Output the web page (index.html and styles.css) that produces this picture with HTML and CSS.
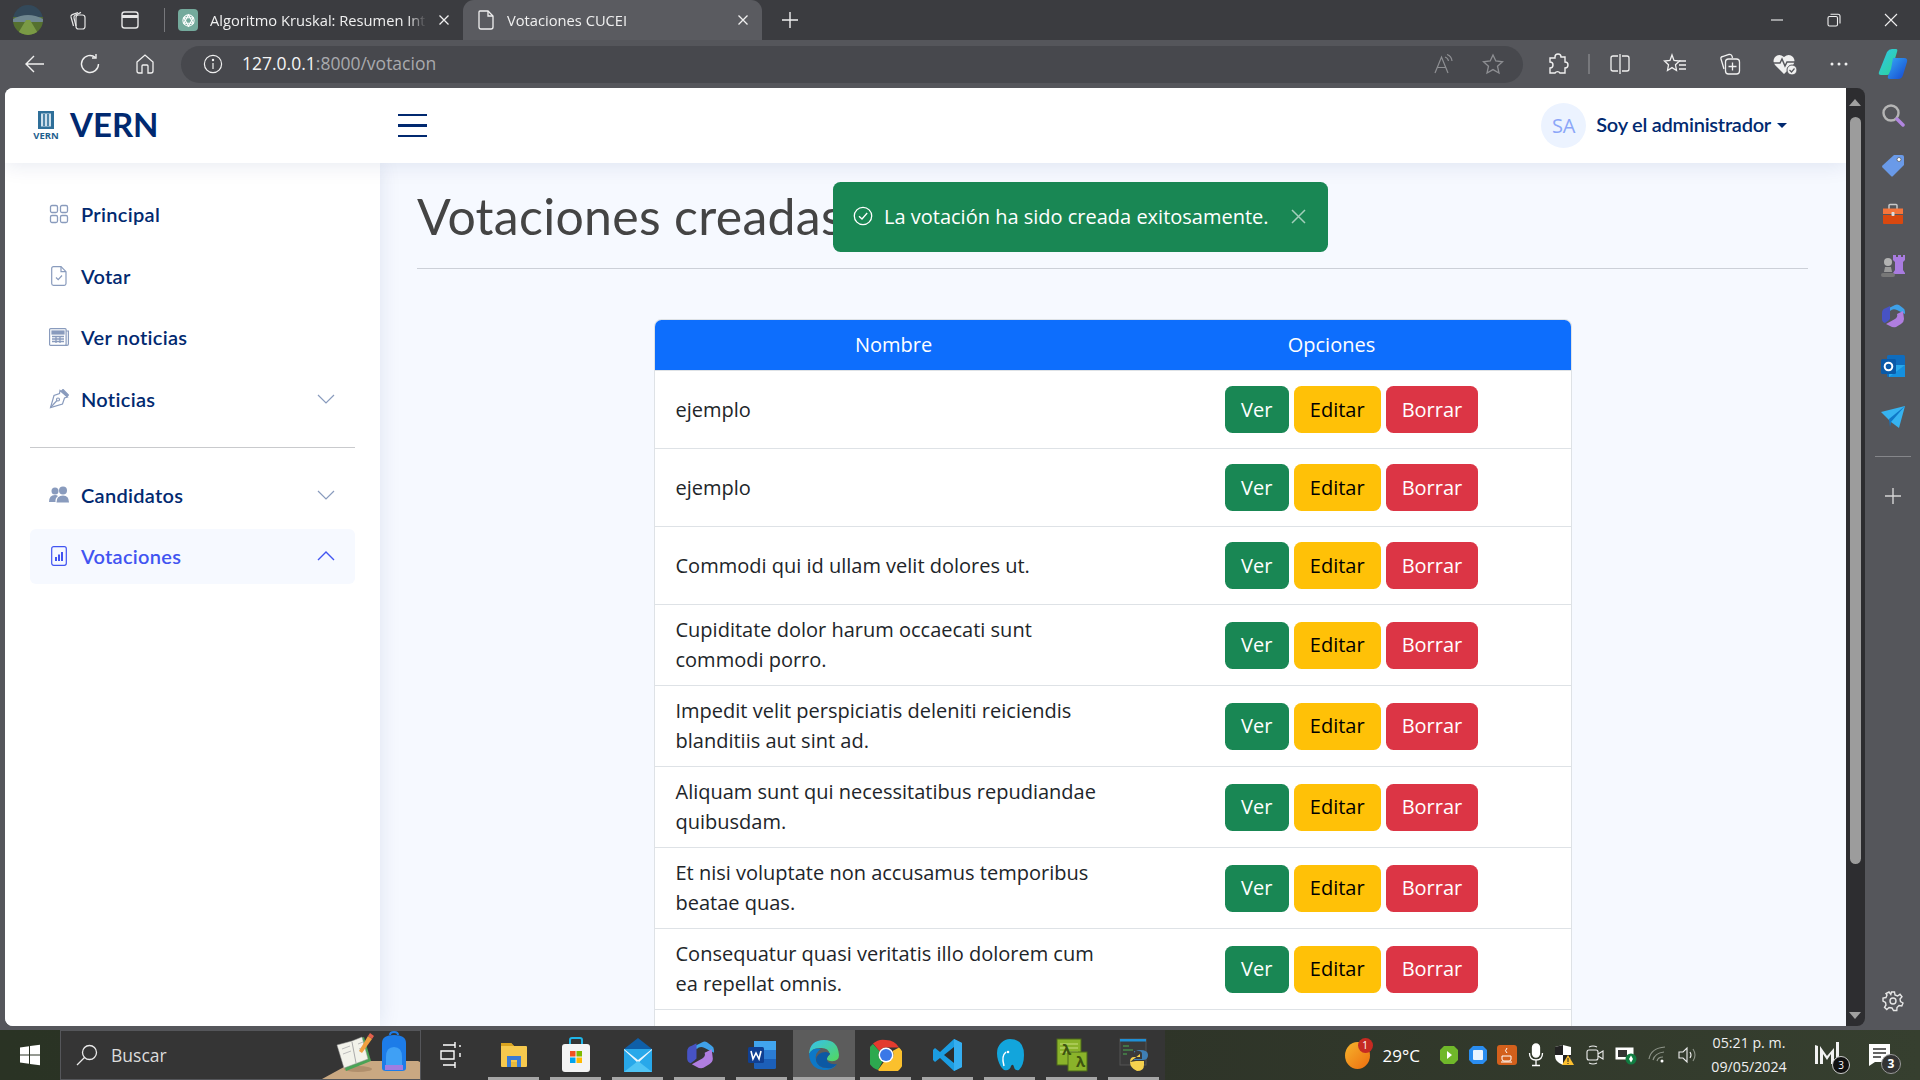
FILE: index.html
```html
<!DOCTYPE html>
<html lang="es">
<head>
  <meta charset="UTF-8">
  <title>Votaciones CUCEI</title>
  <link rel="stylesheet" href="styles.css">
</head>
<body>
<div class="navegador">

  <div class="pestanas">
    <div class="perfil">
      <svg width="30" height="30" viewBox="0 0 30 30"><defs><clipPath id="perfilClip"><ellipse cx="15" cy="15" rx="15" ry="15"/></clipPath></defs><g clip-path="url(#perfilClip)"><rect width="30" height="14" fill="#33495a"/><rect y="12" width="30" height="18" fill="#55702f"/><path d="M0 14 Q15 6 30 14 L30 17 L0 17Z" fill="#6f8790"/><path d="M4 30 L13 15 L17 15 L26 30Z" fill="#7a9a45"/></g></svg>
    </div>
    <div class="chrome-btn">
      <svg width="22" height="22" viewBox="0 0 22 22" fill="none" stroke="#e6e6e6" stroke-width="1.2"><rect x="9" y="6" width="9" height="14" rx="2.5"/><path d="M6.5 17 L4 8 Q3.6 6.3 5.2 5.6 L11 3.6"/><path d="M9 17 L7 9 Q6.6 7 8.2 6.2 L14 3.4"/></svg>
    </div>
    <div class="chrome-btn">
      <svg width="20" height="20" viewBox="0 0 20 20" fill="none" stroke="#e6e6e6" stroke-width="1.4"><rect x="2" y="2" width="16" height="16" rx="2.5"/><path d="M2 6.5H18" stroke-width="3"/></svg>
    </div>
    <div class="separador-v"></div>
    <div class="pestana">
      <span class="favicon-gpt">
        <svg width="15" height="15" viewBox="0 0 16 16" fill="none" stroke="#fff" stroke-width="1.1"><circle cx="8" cy="8" r="6"/><path d="M8 2 L13 11 H3Z"/><path d="M3 5 H13 L8 14Z"/></svg>
      </span>
      <span class="pestana-texto">Algoritmo Kruskal: Resumen Intro</span>
      <svg class="pestana-x" width="12" height="12" viewBox="0 0 12 12" stroke="#f0f0f0" stroke-width="1.3"><path d="M1.5 1.5 10.5 10.5M10.5 1.5 1.5 10.5"/></svg>
    </div>
    <div class="pestana activa">
      <svg width="18" height="22" viewBox="0 0 18 22" fill="none" stroke="#f0f0f0" stroke-width="1.3"><path d="M3 2H11L16 7V18Q16 20 14 20H4Q2 20 2 18V3Q2 2 3 2Z"/><path d="M11 2V7H16"/></svg>
      <span class="pestana-texto">Votaciones CUCEI</span>
      <svg class="pestana-x" width="12" height="12" viewBox="0 0 12 12" stroke="#f0f0f0" stroke-width="1.3"><path d="M1.5 1.5 10.5 10.5M10.5 1.5 1.5 10.5"/></svg>
    </div>
    <div class="nueva">
      <svg width="18" height="18" viewBox="0 0 18 18" stroke="#f0f0f0" stroke-width="1.4"><path d="M9 1V17M1 9H17"/></svg>
    </div>
    <div class="ventana">
      <svg width="14" height="14" viewBox="0 0 14 14" stroke="#f0f0f0" stroke-width="1.1"><path d="M1 7H13"/></svg>
      <svg width="14" height="14" viewBox="0 0 14 14" fill="none" stroke="#f0f0f0" stroke-width="1.1"><rect x="1" y="3.5" width="9.5" height="9.5" rx="1.5"/><path d="M3.5 1.2H11Q13 1.2 13 3.2V10.5"/></svg>
      <svg width="14" height="14" viewBox="0 0 14 14" stroke="#f0f0f0" stroke-width="1.1"><path d="M1 1 13 13M13 1 1 13"/></svg>
    </div>
  </div>

  <div class="barra">
    <div class="barra-nav">
      <div class="chrome-btn ancho">
        <svg width="22" height="20" viewBox="0 0 22 20" fill="none" stroke="#f0f0f0" stroke-width="1.4"><path d="M20 10H2M10 2 2 10 10 18"/></svg>
      </div>
      <div class="chrome-btn ancho">
        <svg width="22" height="22" viewBox="0 0 22 22" fill="none" stroke="#f0f0f0" stroke-width="1.4"><path d="M16.500 4.500A8.500 8.500 0 1 0 19.500 11"/><path d="M17 1V5H13"/></svg>
      </div>
      <div class="chrome-btn ancho">
        <svg width="22" height="22" viewBox="0 0 22 22" fill="none" stroke="#f0f0f0" stroke-width="1.3"><path d="M3 9 11 2 19 9V18Q19 20 17 20H14V13Q14 12 13 12H9Q8 12 8 13V20H5Q3 20 3 18Z"/></svg>
      </div>
    </div>
    <div class="direccion">
      <svg width="20" height="20" viewBox="0 0 20 20" fill="none" stroke="#f0f0f0" stroke-width="1.2"><circle cx="10" cy="10" r="8.6"/><path d="M10 9V15"/><circle cx="10" cy="6" r=".6" fill="#f0f0f0"/></svg>
      <span class="url"><span class="url-host">127.0.0.1</span>:8000/votacion</span>
      <span class="direccion-acciones">
        <svg width="22" height="22" viewBox="0 0 22 22" fill="none" stroke="#8e8f93" stroke-width="1.2"><path d="M2 20 8.5 4 15 20M4.5 14.5H12.5"/><path d="M12 4Q15 5 15.5 8M14 1.5Q18.5 3 19 8"/></svg>
        <svg width="22" height="22" viewBox="0 0 22 22" fill="none" stroke="#8e8f93" stroke-width="1.3"><path d="M11 2 13.8 8 20.5 8.8 15.5 13.2 17 20 11 16.6 5 20 6.5 13.2 1.5 8.8 8.2 8Z"/></svg>
      </span>
    </div>
    <div class="barra-extras">
      <div class="chrome-btn ancho">
        <svg width="22" height="22" viewBox="0 0 22 22" fill="none" stroke="#f0f0f0" stroke-width="1.4"><path d="M8 4A3 3 0 0 1 14 4H18V9A3 3 0 0 1 18 15V20H13A3 3 0 0 0 8 20H3V15A3 3 0 0 0 3 9V5H8Z"/></svg>
      </div>
      <div class="separador-b"></div>
      <div class="chrome-btn ancho">
        <svg width="22" height="22" viewBox="0 0 22 22" fill="none" stroke="#f0f0f0" stroke-width="1.3"><path d="M9 3H4Q2 3 2 5V16Q2 18 4 18H9M13 3H18Q20 3 20 5V16Q20 18 18 18H13M11 1V21"/></svg>
      </div>
      <div class="chrome-btn ancho">
        <svg width="24" height="22" viewBox="0 0 24 22" fill="none" stroke="#f0f0f0" stroke-width="1.3"><path d="M9 2 11 7.5 16.5 8 12.5 11.8 13.5 17.5 9 14.6 4.5 17.5 5.5 11.8 1.5 8 7 7.5Z"/><path d="M16 8H23M16 12H23M16 16H23"/></svg>
      </div>
      <div class="chrome-btn ancho">
        <svg width="24" height="24" viewBox="0 0 24 24" fill="none" stroke="#f0f0f0" stroke-width="1.3"><path d="M6 17 3 7Q2.5 5 4.5 4.5L11 2.5Q13 2 14 4L14.500 6"/><rect x="7.500" y="7" width="14" height="15" rx="3"/><path d="M14.500 10.500V18.500M10.500 14.500H18.500"/></svg>
      </div>
      <div class="chrome-btn ancho">
        <svg width="26" height="24" viewBox="0 0 26 24"><path d="M12 22 3 13Q0 9 3 5 7 1 12 5 17 1 21 5 24 9 21 13Z" fill="#f0f0f0"/><path d="M1 11H8L10 7 13 14 15 10H23" fill="none" stroke="#55565b" stroke-width="1.5"/><circle cx="20" cy="18" r="5" fill="#f0f0f0" stroke="#55565b"/><path d="M17.500 18 19.500 20 22.500 16.500" fill="none" stroke="#55565b" stroke-width="1.2"/></svg>
      </div>
      <div class="chrome-btn ancho-mas">
        <svg width="18" height="4" viewBox="0 0 18 4" fill="#f0f0f0"><circle cx="2" cy="2" r="1.500"/><circle cx="9" cy="2" r="1.500"/><circle cx="16" cy="2" r="1.500"/></svg>
      </div>
      <div class="chrome-btn ancho-mas">
        <svg width="32" height="32" viewBox="0 0 32 32"><defs><linearGradient id="copA" x1="0" y1="0" x2="1" y2="1"><stop offset="0" stop-color="#2fc6f0"/><stop offset="1" stop-color="#2ed48e"/></linearGradient><linearGradient id="copB" x1="0" y1="0" x2="1" y2="1"><stop offset="0" stop-color="#35a8f5"/><stop offset="1" stop-color="#1546d0"/></linearGradient></defs><path d="M10 4Q12 1 15 1H19Q21 1 20 4L14 24Q13 27 10 27H4Q1 27 2 24Z" fill="url(#copA)"/><path d="M16 10H27Q31 10 30 14L26 27Q25 31 21 31H13Q10 31 11 28L14 21Z" fill="url(#copB)"/></svg>
      </div>
    </div>
  </div>

  <div class="medio">
    <div class="pagina">
      <header class="cabecera">
        <a class="logo" href="#">
          <span class="logo-marca">
            <svg width="16" height="18" viewBox="0 0 16 18"><rect width="16" height="18" fill="#2f6f99"/><rect x="3" y="2.500" width="10" height="13" fill="#cfe0ec"/><path d="M6 3V15M10 3V15" stroke="#2f6f99" stroke-width="1.600"/></svg>
            <span class="logo-mini">VERN</span>
          </span>
          <span class="logo-texto">VERN</span>
        </a>
        <button class="menu-btn" aria-label="Menú">
          <span></span><span></span><span></span>
        </button>
        <div class="usuario">
          <span class="avatar">SA</span>
          <span class="usuario-nombre">Soy el administrador</span>
          <span class="caret"></span>
        </div>
      </header>

      <div class="contenido">
        <aside class="lateral">
          <a class="nav-item" href="#">
            <svg class="nav-icono" width="20" height="20" viewBox="0 0 20 20" fill="none" stroke="currentColor" stroke-width="1.3"><rect x="1.500" y="1.500" width="7" height="7" rx="1.500"/><rect x="11.500" y="1.500" width="7" height="7" rx="1.500"/><rect x="1.500" y="11.500" width="7" height="7" rx="1.500"/><rect x="11.500" y="11.500" width="7" height="7" rx="1.500"/></svg>
            <span>Principal</span>
          </a>
          <a class="nav-item" href="#">
            <svg class="nav-icono" width="20" height="20" viewBox="0 0 20 20" fill="none" stroke="currentColor" stroke-width="1.200"><path d="M4.500 .7H12L17 5.700V17.500Q17 19.300 15.200 19.300H4.500Q2.700 19.300 2.700 17.500V2.500Q2.700 .7 4.500 .7Z"/><path d="M12 .7V5.700H17"/><path d="M7 11.500 9.200 13.700 13 9.500"/></svg>
            <span>Votar</span>
          </a>
          <a class="nav-item" href="#">
            <svg class="nav-icono" width="20" height="20" viewBox="0 0 20 20" fill="none" stroke="currentColor" stroke-width="1.200"><rect x=".6" y="1.600" width="16.500" height="16.800" rx="1"/><path d="M17.100 4H19.400V17Q19.400 18.400 18 18.400H16"/><rect x="3" y="4" width="12" height="3" fill="currentColor"/><path d="M3 9.500H15M3 12H15M3 14.500H15M7 9V16M11 9V16" stroke-width="1.300"/></svg>
            <span>Ver noticias</span>
          </a>
          <a class="nav-item" href="#">
            <svg class="nav-icono" width="20" height="20" viewBox="0 0 20 20" fill="none" stroke="currentColor" stroke-width="1.200"><path d="M11 1.500 18.500 8 15.500 9 13.500 15 1.500 18.500 5 6.500 10.500 4.500Z"/><path d="M1.500 18.500 8 11.500"/><circle cx="9" cy="10.500" r="1.500"/><path d="M14 .5 19.500 6 18 7.500 12.500 2Z" fill="currentColor"/></svg>
            <span>Noticias</span>
            <svg class="nav-flecha" width="18" height="10" viewBox="0 0 18 10" fill="none" stroke="currentColor" stroke-width="1.200"><path d="M1 1 9 9 17 1"/></svg>
          </a>
          <hr class="nav-linea">
          <a class="nav-item" href="#">
            <svg class="nav-icono" width="20" height="20" viewBox="0 0 20 20" fill="currentColor"><circle cx="6" cy="6" r="3.500"/><circle cx="14" cy="5.500" r="4"/><path d="M0 17Q0 10 6 10 8 10 9 11 6 13 6.500 17Z"/><path d="M7.500 17.500Q7.500 10.500 14 10.500 20 10.500 20 17.500Z"/></svg>
            <span>Candidatos</span>
            <svg class="nav-flecha" width="18" height="10" viewBox="0 0 18 10" fill="none" stroke="currentColor" stroke-width="1.200"><path d="M1 1 9 9 17 1"/></svg>
          </a>
          <a class="nav-item activo" href="#">
            <svg class="nav-icono" width="20" height="20" viewBox="0 0 20 20" fill="none" stroke="currentColor" stroke-width="1.200"><rect x="2.700" y=".7" width="14.600" height="18.600" rx="2"/><path d="M7 11V15M10 8.500V15M13 6V15" stroke-width="2"/></svg>
            <span>Votaciones</span>
            <svg class="nav-flecha" width="18" height="10" viewBox="0 0 18 10" fill="none" stroke="currentColor" stroke-width="1.400"><path d="M1 9 9 1 17 9"/></svg>
          </a>
        </aside>

        <main class="principal">
          <div class="titulo">
            <h1>Votaciones creadas</h1>
          </div>

          <div class="alerta">
            <svg width="20" height="20" viewBox="0 0 20 20" fill="none" stroke="#fff" stroke-width="1.300"><circle cx="10" cy="10" r="8.700"/><path d="M6 10.200 9 13 14.200 7"/></svg>
            <span class="alerta-texto">La votación ha sido creada exitosamente.</span>
            <svg class="alerta-x" width="15" height="15" viewBox="0 0 15 15" stroke="#a3cfbb" stroke-width="1.500"><path d="M1 1 14 14M14 1 1 14"/></svg>
          </div>

          <div class="tabla">
            <div class="tabla-cabecera">
              <div>Nombre</div>
              <div>Opciones</div>
            </div>
            <div class="fila">
              <div class="nombre">ejemplo</div>
              <div class="acciones"><a class="btn verde" href="#">Ver</a><a class="btn amarillo" href="#">Editar</a><a class="btn rojo" href="#">Borrar</a></div>
            </div>
            <div class="fila">
              <div class="nombre">ejemplo</div>
              <div class="acciones"><a class="btn verde" href="#">Ver</a><a class="btn amarillo" href="#">Editar</a><a class="btn rojo" href="#">Borrar</a></div>
            </div>
            <div class="fila">
              <div class="nombre">Commodi qui id ullam velit dolores ut.</div>
              <div class="acciones"><a class="btn verde" href="#">Ver</a><a class="btn amarillo" href="#">Editar</a><a class="btn rojo" href="#">Borrar</a></div>
            </div>
            <div class="fila">
              <div class="nombre">Cupiditate dolor harum occaecati sunt commodi porro.</div>
              <div class="acciones"><a class="btn verde" href="#">Ver</a><a class="btn amarillo" href="#">Editar</a><a class="btn rojo" href="#">Borrar</a></div>
            </div>
            <div class="fila">
              <div class="nombre">Impedit velit perspiciatis deleniti reiciendis blanditiis aut sint ad.</div>
              <div class="acciones"><a class="btn verde" href="#">Ver</a><a class="btn amarillo" href="#">Editar</a><a class="btn rojo" href="#">Borrar</a></div>
            </div>
            <div class="fila">
              <div class="nombre">Aliquam sunt qui necessitatibus repudiandae quibusdam.</div>
              <div class="acciones"><a class="btn verde" href="#">Ver</a><a class="btn amarillo" href="#">Editar</a><a class="btn rojo" href="#">Borrar</a></div>
            </div>
            <div class="fila">
              <div class="nombre">Et nisi voluptate non accusamus temporibus beatae quas.</div>
              <div class="acciones"><a class="btn verde" href="#">Ver</a><a class="btn amarillo" href="#">Editar</a><a class="btn rojo" href="#">Borrar</a></div>
            </div>
            <div class="fila">
              <div class="nombre">Consequatur quasi veritatis illo dolorem cum ea repellat omnis.</div>
              <div class="acciones"><a class="btn verde" href="#">Ver</a><a class="btn amarillo" href="#">Editar</a><a class="btn rojo" href="#">Borrar</a></div>
            </div>
            <div class="fila fila-vacia"></div>
          </div>
        </main>
      </div>
    </div>

    <div class="scroll">
      <span class="scroll-arriba"></span>
      <span class="scroll-pulgar"></span>
      <span class="scroll-abajo"></span>
    </div>

    <div class="panel">
      <svg width="24" height="24" viewBox="0 0 24 24" fill="none"><circle cx="10" cy="10" r="7.500" stroke="#b5b5b5" stroke-width="2.400"/><path d="M16 16 22 22" stroke="#b186e0" stroke-width="3.500" stroke-linecap="round"/></svg>
      <svg width="24" height="24" viewBox="0 0 24 24"><path d="M13 2H21Q23 2 23 4V12L12 23Q11 24 10 23L1.500 14.500Q.5 13.500 1.500 12.500Z" fill="#6a9ae8"/><circle cx="18" cy="6.500" r="2" fill="#fff" stroke="#555" stroke-width=".7"/></svg>
      <svg width="24" height="24" viewBox="0 0 24 24"><path d="M8 7V3.500Q8 2.500 9 2.500H15Q16 2.500 16 3.500V7" fill="none" stroke="#c9c9c9" stroke-width="1.500"/><path d="M2 6.500H22V12H2Z" fill="#f4743b"/><path d="M2 13H22V21Q22 22 21 22H3Q2 22 2 21Z" fill="#d9480f"/><rect x="10.500" y="10" width="3" height="4" rx=".7" fill="#ddd"/></svg>
      <svg width="26" height="26" viewBox="0 0 26 26"><path d="M14 3H17V5H19V3H22V5H24V3H26V8L24 10V18L26 21V22H14V21L16 18V10L14 8Z" fill="#a97ce0" transform="translate(-1)"/><circle cx="8" cy="10" r="4" fill="#b2b2b2"/><path d="M5 15H11L12 20H4Z" fill="#9b9b9b"/><rect x="1" y="21" width="14" height="4" rx="2" fill="#777"/></svg>
      <svg width="24" height="24" viewBox="0 0 24 24"><path d="M8 4 14 1Q16 0 18 1L22 4Q24 5 24 8V10L16 6Q12 4 9 7Z" fill="#3fa1e8"/><path d="M1 9Q1 5 5 4L9 2V15L7 17 4 19Q1 18 1 15Z" fill="#4753c4"/><path d="M22 7 23 15Q23 18 20 20L15 23Q12 24 9 22L5 20 14 15Q17 13 16 10Z" fill="#b07ee0"/></svg>
      <svg width="26" height="26" viewBox="0 0 26 26"><rect x="7" y="2" width="18" height="22" rx="1.500" fill="#0f6cbd"/><path d="M9 12H25V24H9Z" fill="#28a8ea"/><path d="M9 24 25 12V24Z" fill="#1490df"/><rect x="1" y="6" width="15" height="15" rx="1.500" fill="#0a5aa8"/><circle cx="8.500" cy="13.500" r="3.800" fill="none" stroke="#fff" stroke-width="2"/></svg>
      <svg width="26" height="24" viewBox="0 0 26 24"><path d="M1 7 25 1 19 23 11 17Z" fill="#36b3f0"/><path d="M9 14 25 1 11 17 10 22Z" fill="#0f78c8"/></svg>
      <div class="panel-linea"></div>
      <svg width="20" height="20" viewBox="0 0 20 20" stroke="#d5d5d5" stroke-width="1.400"><path d="M10 2V18M2 10H18"/></svg>
      <svg class="panel-engrane" width="22" height="22" viewBox="0 0 22 22" fill="none" stroke="#e6e6e6" stroke-width="1.400"><circle cx="11" cy="11" r="3"/><path d="M9.500 2H12.500L13 5 15.500 6 18 4.300 20 6.800 18 9 18.500 11.500 21 13 19.800 16 17 15.500 15 17.500 14.800 20.500H11.500L10 18 7 17.500 4.800 19.500 2.500 17.300 4 15 3.500 12.500 1 11V8L4 7.500 5 5 4 3.500 7 2 8.800 4.500Z"/></svg>
    </div>
  </div>

  <footer class="tareas">
    <div class="inicio">
      <svg width="22" height="22" viewBox="0 0 22 22" fill="#fff"><path d="M1 3.500 10 2.300V10.500H1ZM11 2.100 21 .8V10.500H11ZM1 11.500H10V19.700L1 18.500ZM11 11.500H21V21.200L11 19.900Z"/></svg>
    </div>
    <div class="buscar">
      <svg width="24" height="24" viewBox="0 0 24 24" fill="none" stroke="#eaeaea" stroke-width="1.300"><circle cx="14.500" cy="9.500" r="7"/><path d="M9.500 14.500 2 22"/></svg>
      <span>Buscar</span>
      <svg class="buscar-deco" width="110" height="50" viewBox="0 0 110 50"><path d="M12 50 45 32H108L110 33V50Z" fill="#c9a882"/><ellipse cx="48" cy="40" rx="14" ry="3" fill="#b08f6c"/><path d="M29 18 54 8 61 32 36 42Z" fill="#4aa356"/><path d="M27 16 42 12 52 8 58 30 34 39Z" fill="#f2f2ea" stroke="#999" stroke-width=".5"/><path d="M42 13 46 34" stroke="#aaa"/><path d="M32 20 40 17M33 25 41 22M48 15 53 13M49 20 54 18" stroke="#bbb"/><path d="M49 22 58 7 62 10 52 24Z" fill="#f0a040"/><path d="M58 7 60 4 64 7 62 10Z" fill="#e5604d"/><path d="M72 14Q72 6 84 6 96 6 96 14V39Q96 42 92 42H76Q72 42 72 39Z" fill="#1d7ce8"/><path d="M76 28Q76 18 84 18 92 18 92 28V36H76Z" fill="#3fa0f5"/><path d="M75 36H93V41H75Z" fill="#a07de0"/><path d="M80 6Q80 3 84 3 88 3 88 6" fill="none" stroke="#1d7ce8" stroke-width="2"/></svg>
    </div>
    <div class="tarea sin-marca">
      <svg width="24" height="26" viewBox="0 0 24 26" fill="none" stroke="#fff" stroke-width="1.400"><path d="M3 3H15M3 23H15M1 9H14V17H1ZM15 0V6M15 20V26M20 3V5M20 11V15"/></svg>
    </div>
    <div class="tarea">
      <svg width="28" height="26" viewBox="0 0 28 26"><path d="M1 2Q1 1 2 1H11L14 4H26Q27 4 27 5V24Q27 25 26 25H2Q1 25 1 24Z" fill="#f6c94e"/><path d="M1 1H11L14 4H1Z" fill="#d9a31f"/><path d="M7 14H21V25H17V18H11V25H7Z" fill="#3a7bd5"/><rect x="11" y="20" width="6" height="5" fill="#e8b93a"/></svg>
    </div>
    <div class="tarea">
      <svg width="30" height="36" viewBox="0 0 30 36"><path d="M9 8V3Q9 1 11 1H19Q21 1 21 3V8" fill="none" stroke="#1fb6e8" stroke-width="2"/><rect x="1" y="7" width="28" height="28" rx="3" fill="#f4f4f4"/><rect x="9" y="14" width="5.500" height="5.500" fill="#f25022"/><rect x="15.500" y="14" width="5.500" height="5.500" fill="#7fba00"/><rect x="9" y="20.500" width="5.500" height="5.500" fill="#00a4ef"/><rect x="15.500" y="20.500" width="5.500" height="5.500" fill="#ffb900"/></svg>
    </div>
    <div class="tarea">
      <svg width="30" height="36" viewBox="0 0 30 36"><path d="M15 1 29 12H1Z" fill="#0f5fa8"/><rect x="1" y="12" width="28" height="23" fill="#28a8ea"/><path d="M1 12 15 23 29 12V13L15 26 1 13Z" fill="#eaf6fd"/><path d="M1 35 15 24 29 35Z" fill="#50c4f4"/></svg>
    </div>
    <div class="tarea">
      <svg width="28" height="28" viewBox="0 0 24 24"><path d="M8 4 14 1Q16 0 18 1L22 4Q24 5 24 8V10L16 6Q12 4 9 7Z" fill="#3fa1e8"/><path d="M1 9Q1 5 5 4L9 2V15L7 17 4 19Q1 18 1 15Z" fill="#4753c4"/><path d="M22 7 23 15Q23 18 20 20L15 23Q12 24 9 22L5 20 14 15Q17 13 16 10Z" fill="#b07ee0"/></svg>
    </div>
    <div class="tarea">
      <svg width="30" height="30" viewBox="0 0 30 30"><rect x="7" y="1" width="22" height="28" rx="1.500" fill="#1c5fb8"/><rect x="7" y="1" width="22" height="9" fill="#41a5ee"/><rect x="7" y="10" width="22" height="9" fill="#2b7cd3"/><rect x="1" y="7" width="16" height="16" rx="1.500" fill="#103f91"/><path d="M4 11 6 19 9 13 12 19 14 11" fill="none" stroke="#fff" stroke-width="1.600"/></svg>
    </div>
    <div class="tarea abierta">
      <svg width="32" height="32" viewBox="0 0 32 32"><defs><linearGradient id="edgeG" x1="0" y1="0" x2="1" y2="1"><stop offset="0" stop-color="#35c1f1"/><stop offset="1" stop-color="#53d85a"/></linearGradient></defs><path d="M1 15Q2 1 16 1 30 1 31 16 31 23 22 22 16 21 22 15 20 8 12 9 4 9 1 15Z" fill="url(#edgeG)"/><path d="M1 15Q5 8 13 10 6 14 8 22 11 30 21 29 26 28 29 25 25 31 16 31 2 30 1 15Z" fill="#0c78c8"/><path d="M8 21Q9 13 18 13 22 14 22 15 17 19 20 23 24 26 29 25 25 30 19 29 9 28 8 21Z" fill="#0c59a4"/></svg>
    </div>
    <div class="tarea">
      <svg width="32" height="32" viewBox="0 0 32 32"><path d="M16 1A15 15 0 0 1 29 8.500H16A7.500 7.500 0 0 0 9.500 12.200L3 4.500A15 15 0 0 1 16 1Z" fill="#e33b2e"/><path d="M3 5 9.500 12.200A7.500 7.500 0 0 0 12.500 22.500L8 31A15 15 0 0 1 3 5Z" fill="#2da94f"/><path d="M29 8.500A15 15 0 0 1 8 31L14 22.800A7.500 7.500 0 0 0 22.500 12Z" fill="#fbc02d"/><circle cx="16" cy="16" r="7.500" fill="#fff"/><circle cx="16" cy="16" r="6" fill="#3b78e7"/></svg>
    </div>
    <div class="tarea">
      <svg width="30" height="34" viewBox="0 0 30 34"><path d="M21 1 29 5V29L21 33 7 20 2 24 0 22V12L2 10 7 14Z" fill="#1b9de2"/><path d="M21 9V25L11 17Z" fill="#2c2c2c"/><path d="M21 1 29 5V29L21 33Z" fill="#35aef0"/></svg>
    </div>
    <div class="tarea">
      <svg width="30" height="34" viewBox="0 0 30 34"><path d="M15 1Q29 1 29 17 29 27 24 32 20 33 19 29 18 25 16 28 15 33 9 32 5 29 3 22 0 11 6 5 10 1 15 1Z" fill="#12a5dc"/><path d="M11 14Q6 18 9 28" fill="none" stroke="#fff" stroke-width="1.500"/><circle cx="13" cy="14" r="1.300" fill="#fff"/></svg>
    </div>
    <div class="tarea">
      <svg width="32" height="34" viewBox="0 0 32 34"><rect x="1" y="1" width="24" height="26" fill="#8ab32a" stroke="#4d6a1a"/><path d="M4 6H22M4 10H22M4 14H22" stroke="#c8de7c"/><rect x="12" y="14" width="19" height="19" fill="#8ab32a" stroke="#4d6a1a"/></svg>
      <span class="lambda uno">λ</span>
      <span class="lambda dos">λ</span>
    </div>
    <div class="tarea">
      <svg width="30" height="34" viewBox="0 0 30 34"><rect x="1" y="1" width="26" height="26" fill="#3a3a3a" stroke="#555"/><rect x="1" y="1" width="26" height="2.500" fill="#1f8fd6"/><path d="M4 8H10M4 12H14M4 16H8" stroke="#4caf50"/><path d="M15 13Q23 12 23 16V21H15V22H24Q29 22 29 17 29 12 21 12 15 12 15 16Z" fill="#3f7fb5"/><path d="M11 24Q11 19 15 19H21V16 M11 24Q11 30 18 33 25 33 25 27V23H17" fill="#f5d14e"/></svg>
    </div>

    <div class="bandeja">
      <span class="clima">
        <span class="clima-sol"></span>
        <span class="clima-aviso">1</span>
      </span>
      <span class="clima-temp">29°C</span>
      <div class="bandeja-iconos">
        <svg width="18" height="18" viewBox="0 0 18 18"><path d="M4 0H14L18 4V14L14 18H4L0 14V4Z" fill="#70b82a"/><path d="M7 5 12 9 7 13Z" fill="#fff"/></svg>
        <svg width="18" height="18" viewBox="0 0 18 18"><path d="M4 0H14L18 4V14L14 18H4L0 14V4Z" fill="#2a8df0"/><rect x="4" y="4" width="10" height="10" rx="1" fill="#eaf4ff"/></svg>
        <svg width="20" height="20" viewBox="0 0 20 20"><rect width="20" height="20" rx="3" fill="#d3601c"/><path d="M5 11H14V14Q14 16 12 16H7Q5 16 5 14ZM4 17H15" stroke="#fff" fill="none"/><path d="M10 3Q7 6 10 8" stroke="#fff" fill="none"/></svg>
        <svg width="16" height="24" viewBox="0 0 16 24" fill="none" stroke="#fff" stroke-width="1.300"><rect x="4.500" y="1" width="7" height="13" rx="3.500" fill="#fff"/><path d="M1.500 10Q1.500 17 8 17 14.500 17 14.500 10M8 17V22M4 22.500H12"/></svg>
        <svg width="20" height="22" viewBox="0 0 20 22"><path d="M9 1 17 3V12Q17 18 9 21 1 18 1 12V3Z" fill="#fff"/><path d="M9 1V11H1V3ZM9 11H17V12Q17 18 9 21Z" fill="#222"/><path d="M14 11 20 21H8Z" fill="#fdc02f"/><path d="M14 14V18M14 19V20" stroke="#222"/></svg>
        <svg width="20" height="20" viewBox="0 0 20 20" fill="none" stroke="#eee" stroke-width="1.100"><rect x="2" y="5" width="11" height="10" rx="2"/><path d="M13 9 18 6V14L13 11M4 2Q8 0 12 2M4 18Q8 20 12 18"/></svg>
        <svg width="22" height="20" viewBox="0 0 22 20"><rect x="1" y="3" width="17" height="11" fill="#fff" stroke="#fff"/><rect x="3" y="5" width="9" height="7" fill="#333"/><circle cx="16" cy="14" r="5.500" fill="#107c41"/><path d="M16 10.500 18 14 16 17.500 14 14Z" fill="#fff"/></svg>
        <svg width="20" height="18" viewBox="0 0 20 18" fill="none" stroke="#8f958a" stroke-width="1.200"><path d="M1 13Q3 2 17 1M5 14Q7 7 16 6M9 15Q10 11 15 11"/><circle cx="14" cy="15" r="1.500" fill="#fff" stroke="none"/></svg>
        <svg width="20" height="20" viewBox="0 0 20 20" fill="none" stroke="#eee" stroke-width="1.100"><path d="M1 7H5L9 3V17L5 13H1Z"/><path d="M12 7Q14 10 12 13"/><path d="M15 4Q19 10 15 16" stroke="#8f958a"/></svg>
      </div>
      <div class="reloj">
        <span>05:21 p. m.</span>
        <span>09/05/2024</span>
      </div>
      <span class="icono-m">
        <svg width="28" height="26" viewBox="0 0 28 26" fill="#f2f2f2"><path d="M0 3 3 4V22H0ZM5 4 12 14 19 6V22H16V12L12 18 8 12V22H5ZM21 0H24V22H21Z"/></svg>
        <span class="icono-m-num">3</span>
      </span>
      <span class="notifica">
        <svg width="22" height="22" viewBox="0 0 22 22"><path d="M0 0H21V18H6L0 22Z" fill="#fff"/><path d="M4 5H17M4 9H17M4 13H12" stroke="#333" stroke-width="1.300"/></svg>
        <span class="notifica-num">3</span>
      </span>
    </div>
  </footer>
</div>
</body>
</html>
```

FILE: styles.css
```css
* {
  box-sizing: border-box;
}

body {
  margin: 0;
  background: #55565b;
  color: #212529;
  font-family: "Open Sans", "Noto Sans", sans-serif;
  font-size: 20px;
  overflow: hidden;
}

a {
  text-decoration: none;
}

.navegador {
  display: flex;
  flex-direction: column;
  width: 1920px;
  height: 1080px;
}

/* pestañas */

.pestanas {
  display: flex;
  align-items: center;
  flex: 0 0 40px;
  background: #3b3c40;
  color: #f0f0f0;
  font-size: 14.700px;
}

.perfil {
  display: flex;
  margin: 0 9px 0 13px;
}

.chrome-btn {
  display: flex;
  align-items: center;
  justify-content: center;
  width: 52px;
  height: 40px;
}

.separador-v {
  width: 1px;
  height: 24px;
  margin: 0 13px 0 8px;
  background: #77787c;
}

.pestana {
  display: flex;
  align-items: center;
  gap: 12px;
  width: 285px;
  height: 40px;
  padding: 0 13px 0 0;
}

.pestana-texto {
  flex: 1;
  overflow: hidden;
  white-space: nowrap;
  -webkit-mask-image: linear-gradient(to right, #000 92%, transparent);
  mask-image: linear-gradient(to right, #000 92%, transparent);
}

.favicon-gpt {
  display: flex;
  align-items: center;
  justify-content: center;
  width: 20px;
  height: 22px;
  border-radius: 4px;
  background: #74aa9c;
}

.pestana.activa {
  width: 299px;
  padding: 0 13px 0 14px;
  border-radius: 11px 11px 0 0;
  background: #5a5b60;
}

.nueva {
  display: flex;
  margin-left: 19px;
}

.ventana {
  display: flex;
  align-items: center;
  gap: 43px;
  margin-left: auto;
  padding-right: 22px;
}

/* barra de dirección */

.barra {
  display: flex;
  align-items: center;
  flex: 0 0 48px;
  background: #55565b;
}

.barra-nav {
  display: flex;
  padding-left: 7px;
}

.chrome-btn.ancho {
  width: 55px;
  height: 40px;
}

.chrome-btn.ancho-mas {
  width: 54px;
}

.direccion {
  display: flex;
  align-items: center;
  width: 1345px;
  height: 37px;
  margin-left: 9px;
  padding: 0 19px 0 22px;
  border-radius: 19px;
  background: #47484d;
}

.url {
  margin-left: 19px;
  padding-bottom: 2px;
  color: #a9aaad;
  font-size: 17.500px;
}

.url-host {
  color: #f5f5f5;
}

.direccion-acciones {
  display: flex;
  gap: 27px;
  margin-left: auto;
}

.barra-extras {
  display: flex;
  align-items: center;
  margin-left: 7px;
}

.separador-b {
  width: 2px;
  height: 20px;
  margin: 0 2px 0 3px;
  background: #77787c;
}

/* página */

.medio {
  display: flex;
  flex: 1;
  min-height: 0;
  padding: 0 0 4px 5px;
}

.pagina {
  display: flex;
  flex-direction: column;
  width: 1841px;
  overflow: hidden;
  border-radius: 8px 0 0 8px;
  background: #f6f9ff;
}

.cabecera {
  position: relative;
  z-index: 2;
  display: flex;
  align-items: center;
  flex: 0 0 75px;
  padding: 0 59px 0 27px;
  background: #fff;
  box-shadow: 0 2px 20px rgba(1, 41, 112, 0.1);
}

.logo {
  display: flex;
  align-items: center;
  gap: 10px;
  width: 366px;
  color: #012970;
}

.logo-marca {
  display: flex;
  flex-direction: column;
  align-items: center;
  gap: 2px;
  width: 28px;
}

.logo-mini {
  font-family: "Open Sans", sans-serif;
  font-size: 9.500px;
  font-weight: 700;
  line-height: 9px;
  color: #1f5f8f;
}

.logo-texto {
  padding-bottom: 3px;
  font-family: Lato, sans-serif;
  font-size: 33px;
  font-weight: 700;
}

.menu-btn {
  display: flex;
  flex-direction: column;
  gap: 8px;
  width: 29px;
  padding: 0;
  border: 0;
  background: none;
}

.menu-btn span {
  width: 29px;
  height: 2.500px;
  background: #012970;
}

.usuario {
  display: flex;
  align-items: center;
  margin-left: auto;
  color: #012970;
  font-family: Lato, sans-serif;
  font-weight: 600;
}

.avatar {
  display: flex;
  align-items: center;
  justify-content: center;
  width: 45px;
  height: 45px;
  margin-right: 10px;
  border-radius: 50%;
  background: #ecf3ff;
  color: #8ba6f8;
  font-family: "Open Sans", sans-serif;
  font-weight: 400;
}

.usuario-nombre {
  padding-bottom: 3px;
  letter-spacing: -0.250px;
}

.caret {
  width: 0;
  height: 0;
  margin-left: 6px;
  border-top: 5px solid #012970;
  border-right: 5px solid transparent;
  border-left: 5px solid transparent;
}

.contenido {
  display: flex;
  flex: 1;
  min-height: 0;
}

/* lateral */

.lateral {
  position: relative;
  z-index: 1;
  flex: 0 0 375px;
  padding: 23.500px 25px;
  background: #fff;
  box-shadow: 0 0 20px rgba(1, 41, 112, 0.1);
}

.nav-item {
  display: flex;
  align-items: center;
  height: 55px;
  margin-bottom: 6.500px;
  padding: 0 20px 0 19px;
  border-radius: 6px;
  color: #012970;
  font-family: Lato, sans-serif;
  font-weight: 600;
  letter-spacing: 0.300px;
}

.nav-icono {
  margin-right: 12px;
  color: #899bbd;
}

.nav-flecha {
  margin-left: auto;
  color: #899bbd;
}

.nav-linea {
  margin: 21px 0 19px;
  border: 0;
  border-top: 1px solid #c9cacd;
}

.nav-item.activo {
  background: #f6f9ff;
  color: #4154f1;
}

.activo .nav-icono,
.activo .nav-flecha {
  color: #4154f1;
}

/* principal */

.principal {
  position: relative;
  flex: 1;
  min-width: 0;
  padding: 19px 38px 0 37px;
  overflow: hidden;
}

.titulo {
  height: 87px;
  border-bottom: 1px solid #ccd0d8;
}

.titulo h1 {
  margin: 0;
  color: #444;
  font-family: Lato, sans-serif;
  font-size: 50px;
  font-weight: 400;
  letter-spacing: 0.300px;
  line-height: 68px;
  white-space: nowrap;
}

.alerta {
  position: absolute;
  top: 19px;
  left: 453px;
  display: flex;
  align-items: center;
  width: 495px;
  height: 70px;
  padding: 0 20px 2px 20px;
  border-radius: 7.500px;
  background: #198754;
  color: #fff;
}

.alerta-texto {
  margin-left: 11px;
}

.alerta-x {
  margin-left: auto;
  margin-right: 2px;
}

/* tabla */

.tabla {
  width: 918px;
  margin: 50px auto 0;
  overflow: hidden;
  border: 1px solid #dee2e6;
  border-bottom: 0;
  border-radius: 7.500px 7.500px 0 0;
  background: #fff;
}

.tabla-cabecera {
  display: grid;
  grid-template-columns: 478px 398px;
  align-items: center;
  height: 50px;
  padding-bottom: 1px;
  background: #0d6efd;
  color: #fff;
  text-align: center;
}

.fila {
  display: grid;
  grid-template-columns: 570px 1fr;
  align-items: center;
  border-top: 1px solid #dee2e6;
}

.fila-vacia {
  height: 78px;
}

.nombre {
  padding: 10px 125px 10px 21px;
  line-height: 30px;
}

.acciones {
  display: flex;
  gap: 5px;
  padding: 15px 0;
}

.btn {
  padding: 7.500px 15px;
  border: 1px solid transparent;
  border-radius: 7.500px;
  line-height: 30px;
}

.btn.verde {
  padding: 7.500px 15.500px;
  background: #198754;
  color: #fff;
}

.btn.amarillo {
  background: #ffc107;
  color: #000;
}

.btn.rojo {
  background: #dc3545;
  color: #fff;
}

/* scroll y panel */

.scroll {
  position: relative;
  flex: 0 0 19px;
  border-radius: 0 8px 8px 0;
  background: #2d2d30;
}

.scroll-arriba {
  position: absolute;
  top: 11px;
  left: 3px;
  border-right: 6.500px solid transparent;
  border-bottom: 7px solid #a0a0a0;
  border-left: 6.500px solid transparent;
}

.scroll-pulgar {
  position: absolute;
  top: 29px;
  left: 4px;
  width: 11px;
  height: 747px;
  border-radius: 6px;
  background: #9c9c9c;
}

.scroll-abajo {
  position: absolute;
  bottom: 7px;
  left: 3px;
  border-top: 7px solid #a0a0a0;
  border-right: 6.500px solid transparent;
  border-left: 6.500px solid transparent;
}

.panel {
  display: flex;
  flex: 1;
  flex-direction: column;
  align-items: center;
  gap: 25.700px;
  padding: 15px 0 14px;
}

.panel-linea {
  width: 36px;
  height: 1px;
  margin: 1px 0 3px;
  background: #85868a;
}

.panel-engrane {
  margin-top: auto;
}

/* barra de tareas */

.tareas {
  display: flex;
  align-items: center;
  flex: 0 0 50px;
  background: linear-gradient(to right, #2a3324 0, #2e3428 60%, #363f2f 100%);
  color: #fff;
}

.inicio {
  display: flex;
  align-items: center;
  justify-content: center;
  width: 60px;
  height: 50px;
}

.buscar {
  position: relative;
  display: flex;
  align-items: center;
  gap: 12px;
  width: 361px;
  height: 50px;
  padding-left: 14px;
  overflow: hidden;
  border: 1px solid #55565a;
  background: #353535;
  color: #dcdcdc;
  font-size: 17.500px;
}

.buscar-deco {
  position: absolute;
  right: 0;
  bottom: 0;
}

.tarea {
  position: relative;
  display: flex;
  align-items: center;
  justify-content: center;
  width: 62px;
  height: 50px;
  background: #353535;
}

.tarea::after {
  content: "";
  position: absolute;
  bottom: 0;
  left: 5px;
  width: 51px;
  height: 3px;
  background: #a6a6a6;
}

.tarea.sin-marca::after {
  display: none;
}

.tarea.abierta {
  background: #5c5c5c;
}

.tarea.abierta::after {
  left: 0;
  width: 62px;
}

.lambda {
  position: absolute;
  color: #3d5310;
  font-size: 15px;
  font-weight: 700;
  line-height: 1;
}

.lambda.uno {
  top: 12px;
  left: 21px;
}

.lambda.dos {
  top: 24px;
  left: 35px;
}

.bandeja {
  display: flex;
  align-items: center;
  margin-left: auto;
  padding-right: 29px;
}

.clima {
  position: relative;
  width: 25px;
  height: 27px;
}

.clima-sol {
  display: block;
  width: 25px;
  height: 27px;
  border-radius: 50%;
  background: linear-gradient(135deg, #f6b52c, #ee6d0f);
}

.clima-aviso {
  position: absolute;
  top: -4px;
  right: -3px;
  width: 15px;
  height: 15px;
  border-radius: 50%;
  background: #c62a22;
  font-size: 10px;
  line-height: 15px;
  text-align: center;
}

.clima-temp {
  margin-left: 13px;
  font-size: 17px;
}

.bandeja-iconos {
  display: flex;
  align-items: center;
  gap: 10.500px;
  margin-left: 20px;
}

.reloj {
  display: flex;
  flex-direction: column;
  align-items: center;
  width: 76px;
  margin-left: 13px;
  color: #f0f0f0;
  font-size: 14.200px;
  line-height: 24px;
}

.icono-m {
  position: relative;
  display: flex;
  margin-left: 28px;
}

.icono-m-num {
  position: absolute;
  right: -7px;
  bottom: -6px;
  width: 18px;
  height: 18px;
  border: 1px solid #ccc;
  border-radius: 50%;
  background: #111;
  font-size: 10px;
  line-height: 16px;
  text-align: center;
}

.notifica {
  position: relative;
  display: flex;
  margin-left: 26px;
}

.notifica-num {
  position: absolute;
  right: -10px;
  bottom: -8px;
  width: 20px;
  height: 20px;
  border: 1px solid #999;
  border-radius: 50%;
  background: #333;
  font-size: 12px;
  font-weight: 700;
  line-height: 18px;
  text-align: center;
}
```
